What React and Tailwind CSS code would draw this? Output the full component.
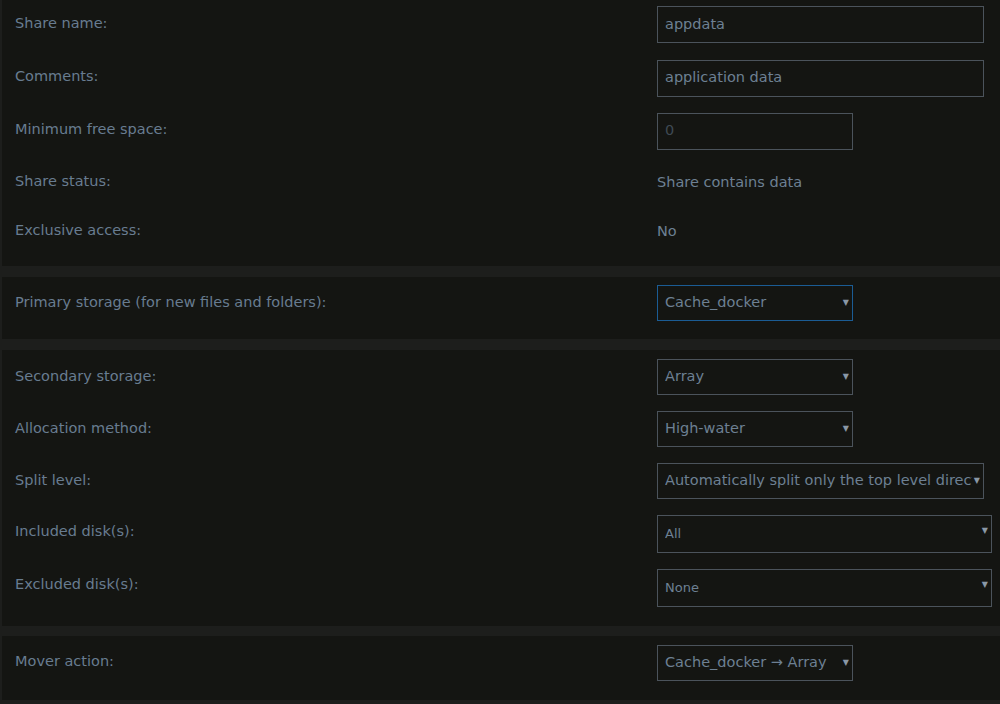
const font = { fontFamily: '"DejaVu Sans", "Liberation Sans", sans-serif' }

function Label({ children, lift = '' }) {
  return (
    <div className={`w-[655px] shrink-0 pl-[13px] text-[14.5px] text-[#687c90] ${lift}`}>
      {children}
    </div>
  )
}

function TextBox({ value, wide, dim }) {
  return (
    <div
      className={`h-[37px] flex items-center px-[7px] border border-[#4b535b] text-[14.5px] ${
        wide ? 'w-[327px]' : 'w-[196px]'
      } ${dim ? 'text-[#3f4a54]' : 'text-[#6d8093]'}`}
    >
      {value}
    </div>
  )
}

function Select({ value, w = 'w-[196px]', focus, small, h = 'h-[36px]' }) {
  return (
    <div
      className={`${w} ${h} flex items-center pl-[7px] pr-[3px] border ${
        focus ? 'border-[#1b5c94]' : 'border-[#4b535b]'
      } ${small ? 'text-[13px]' : 'text-[14.5px]'} text-[#6d8093]`}
    >
      <span className="flex-1 min-w-0 whitespace-nowrap overflow-hidden">{value}</span>
      <span className={`shrink-0 pl-[2px] text-[8px] text-[#8a98a6] ${small ? 'self-start mt-[9px]' : ''}`}>▼</span>
    </div>
  )
}

function Row({ label, h, children, lift }) {
  return (
    <div className={`flex items-center ${h}`}>
      <Label lift={lift}>{label}</Label>
      <div>{children}</div>
    </div>
  )
}

export default function App() {
  return (
    <div className="w-[1000px] h-[704px] overflow-hidden bg-[#1d1e1c] pl-[2px]" style={font}>
      {/* share */}
      <div className="bg-[#141512] h-[266px] pt-[6px]">
        <Row label="Share name:" h="h-[37px]" lift="mb-[2px]">
          <TextBox value="appdata" wide />
        </Row>
        <div className="flex flex-col gap-[15px] mt-[16px]">
          <Row label="Comments:" h="h-[38px]" lift="mb-[3px]">
            <TextBox value="application data" wide />
          </Row>
          <Row label="Minimum free space:" h="h-[38px]" lift="mb-[3px]">
            <TextBox value="0" dim />
          </Row>
        </div>
        <Row label="Share status:" h="h-[64px]">
          <span className="text-[14.5px] text-[#6d8093]">Share contains data</span>
        </Row>
        <Row label="Exclusive access:" h="h-[34px]">
          <span className="text-[14.5px] text-[#6d8093]">No</span>
        </Row>
      </div>

      {/* primary */}
      <div className="mt-[11px] bg-[#141512] h-[62px] pt-[8px]">
        <Row label="Primary storage (for new files and folders):" h="h-[36px]">
          <Select value="Cache_docker" focus />
        </Row>
      </div>

      {/* secondary */}
      <div className="mt-[11px] bg-[#141512] h-[276px] pt-[9px] flex flex-col gap-[16px]">
        <Row label="Secondary storage:" h="h-[36px]" lift="mb-[1px]">
          <Select value="Array" />
        </Row>
        <Row label="Allocation method:" h="h-[36px]" lift="mb-[1px]">
          <Select value="High-water" />
        </Row>
        <Row label="Split level:" h="h-[36px]" lift="mb-[1px]">
          <Select value="Automatically split only the top level directory as required" w="w-[327px]" />
        </Row>
        <Row label="Included disk(s):" h="h-[38px]" lift="mb-[4px]">
          <Select value="All" w="w-[335px]" small h="h-[38px]" />
        </Row>
        <Row label="Excluded disk(s):" h="h-[38px]" lift="mb-[6px]">
          <Select value="None" w="w-[335px]" small h="h-[38px]" />
        </Row>
      </div>

      {/* mover */}
      <div className="mt-[10px] bg-[#141512] h-[64px] pt-[8px]">
        <Row label="Mover action:" h="h-[37px]" lift="mb-[2px]">
          <Select value="Cache_docker → Array" />
        </Row>
      </div>
    </div>
  )
}
